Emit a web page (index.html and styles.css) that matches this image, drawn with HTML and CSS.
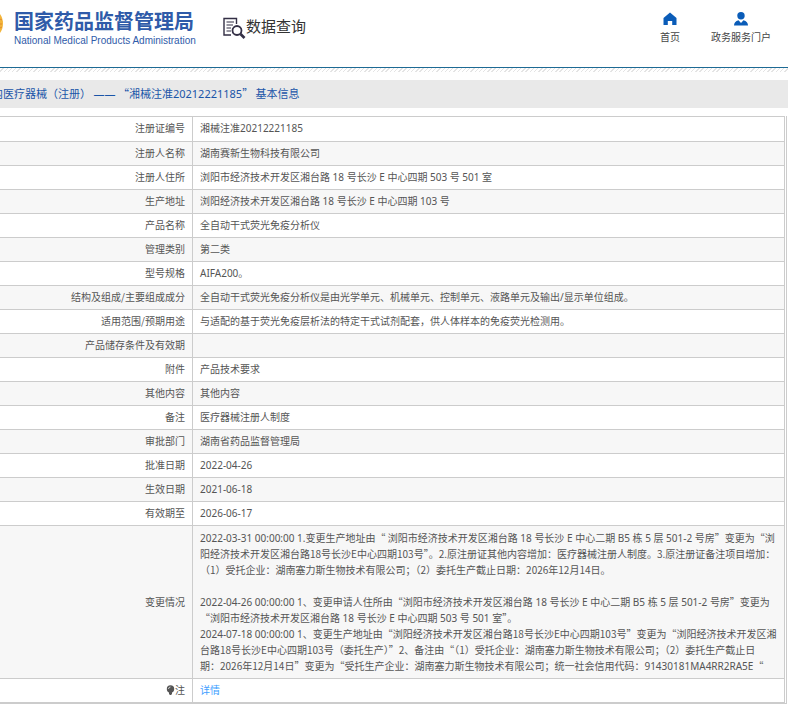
FILE: index.html
```html
<!DOCTYPE html>
<html lang="zh-CN">
<head>
    <meta charset="UTF-8">
    <meta name="viewport" content="width=device-width, initial-scale=1.0">
    <title>数据查询</title>
    <link rel="stylesheet" href="styles.css">
</head>
<body>
    <header class="header">
        <svg class="emblem" width="3" height="24" viewBox="0 0 3 24">
            <path d="M0 2 Q3 6 3 11.500 Q3 17 0 21 Z" fill="#f3b53a"/>
            <path d="M0 7 L2 8 M0 12 L2 12 M0 16 L2 15" stroke="#e08a2c"/>
        </svg>
        <div class="brand">
            <h1 class="brand-name">国家药品监督管理局</h1>
            <p class="brand-en">National Medical Products Administration</p>
        </div>
        <div class="search-title">
            <svg width="23" height="23" viewBox="0 0 23 23" fill="none" stroke="#332f45">
                <path d="M13.500 7 V1.500 H1 V18 H8" stroke-width="1.4"/>
                <path d="M3.500 5 H11 M3.500 8 H10 M3.500 11 H8 M3.500 14 H8" stroke-width="1.2"/>
                <circle cx="14" cy="13.500" r="4.500" stroke-width="1.8"/>
                <path d="M17.500 17 L21.500 21" stroke-width="2.6"/>
            </svg>
            <span>数据查询</span>
        </div>
        <nav class="nav">
            <a href="#" class="nav-link">
                <svg width="14" height="14" viewBox="0 0 14 14">
                    <path d="M7 0.500 L13.500 6 V13 H9.200 V9 H4.800 V13 H0.500 V6 Z" fill="#0a5cb8"/>
                </svg>
                <span>首页</span>
            </a>
            <a href="#" class="nav-link">
                <svg width="14" height="14" viewBox="0 0 14 14" fill="#0a5cb8">
                    <circle cx="7" cy="3.800" r="3.700"/>
                    <path d="M0 13.500 Q0 9.500 4.500 8.300 L7 11 L9.500 8.300 Q14 9.500 14 13.500 Z"/>
                </svg>
                <span>政务服务门户</span>
            </a>
        </nav>
    </header>
    <div class="hatch"></div>
    <div class="crumb">
        <h2 class="crumb-text">内医疗器械（注册） <span class="num">——</span> “湘械注准<span class="num">20212221185</span>” 基本信息</h2>
    </div>

    <main class="detail">
        <table class="detail-table">
            <tr><th scope="row">注册证编号</th><td>湘械注准20212221185</td></tr>
            <tr><th scope="row">注册人名称</th><td>湖南赛新生物科技有限公司</td></tr>
            <tr><th scope="row">注册人住所</th><td>浏阳市经济技术开发区湘台路 18 号长沙 E 中心四期 503 号 501 室</td></tr>
            <tr><th scope="row">生产地址</th><td>浏阳经济技术开发区湘台路 18 号长沙 E 中心四期 103 号</td></tr>
            <tr><th scope="row">产品名称</th><td>全自动干式荧光免疫分析仪</td></tr>
            <tr><th scope="row">管理类别</th><td>第二类</td></tr>
            <tr><th scope="row">型号规格</th><td>AIFA200。</td></tr>
            <tr><th scope="row">结构及组成/主要组成成分</th><td>全自动干式荧光免疫分析仪是由光学单元、机械单元、控制单元、液路单元及输出/显示单位组成。</td></tr>
            <tr><th scope="row">适用范围/预期用途</th><td>与适配的基于荧光免疫层析法的特定干式试剂配套，供人体样本的免疫荧光检测用。</td></tr>
            <tr><th scope="row">产品储存条件及有效期</th><td></td></tr>
            <tr><th scope="row">附件</th><td>产品技术要求</td></tr>
            <tr><th scope="row">其他内容</th><td>其他内容</td></tr>
            <tr><th scope="row">备注</th><td>医疗器械注册人制度</td></tr>
            <tr><th scope="row">审批部门</th><td>湖南省药品监督管理局</td></tr>
            <tr><th scope="row">批准日期</th><td>2022-04-26</td></tr>
            <tr><th scope="row">生效日期</th><td>2021-06-18</td></tr>
            <tr><th scope="row">有效期至</th><td>2026-06-17</td></tr>
            <tr>
                <th scope="row">变更情况</th>
                <td class="changes"><span class="num">2022-03-31 00:00:00 1.</span>变更生产地址由“ 浏阳市经济技术开发区湘台路<span class="num"> 18 </span>号长沙<span class="num"> E </span>中心二期<span class="num"> B5 </span>栋<span class="num"> 5 </span>层<span class="num"> 501-2 </span>号房”变更为“浏<br>
                    阳经济技术开发区湘台路18号长沙E中心四期103号”。2.原注册证其他内容增加：医疗器械注册人制度。3.原注册证备注项目增加：<br>
                    （1）受托企业：湖南塞力斯生物技术有限公司；（2）委托生产截止日期：2026年12月14日。<br>
                    <br>
                    <span class="num">2022-04-26 00:00:00 1</span>、变更申请人住所由“浏阳市经济技术开发区湘台路<span class="num"> 18 </span>号长沙<span class="num"> E </span>中心二期<span class="num"> B5 </span>栋<span class="num"> 5 </span>层<span class="num"> 501-2 </span>号房”变更为<br>
                    “浏阳市经济技术开发区湘台路<span class="num"> 18 </span>号长沙<span class="num"> E </span>中心四期<span class="num"> 503 </span>号<span class="num"> 501 </span>室”。<br>
                    <span class="num">2024-07-18 00:00:00 1</span>、变更生产地址由“浏阳经济技术开发区湘台路18号长沙E中心四期103号”变更为“浏阳经济技术开发区湘<br>
                    台路18号长沙E中心四期103号（委托生产）”2、备注由“（1）受托企业：湖南塞力斯生物技术有限公司；（2）委托生产截止日<br>
                    期：2026年12月14日”变更为“受托生产企业：湖南塞力斯生物技术有限公司；统一社会信用代码：<span class="num">91430181MA4RR2RA5E</span>“</td>
            </tr>
            <tr>
                <th scope="row"><svg class="note-icon" width="9" height="10" viewBox="0 0 9 10">
                    <circle cx="4.500" cy="4" r="3.700" fill="#555"/>
                    <path d="M3 7 H6 V9 L5 10 H4 L3 9 Z" fill="#555"/>
                    <path d="M2.500 4 Q2.500 2 4.500 2" stroke="#ccc" fill="none"/>
                </svg>注</th>
                <td><a href="#" class="more">详情</a></td>
            </tr>
        </table>
    </main>
</body>
</html>
```
FILE: styles.css
```css
body {
    margin: 0;
    background-color: #fff;
    font-family: "Noto Sans CJK SC", sans-serif;
    font-size: 10px;
    line-height: 16px;
    color: #555;
}
h1, h2, p {
    margin: 0;
}
.num {
    font-family: "Noto Sans", "Noto Sans CJK SC", sans-serif;
    line-height: 1;
}
.header {
    display: flex;
    align-items: flex-start;
    height: 67px;
    border-bottom: 1px solid #1d6a94;
}
.emblem {
    margin-top: 12px;
}
.brand {
    width: 180px;
    margin: 9px 0 0 11px;
    color: #2f5ba9;
    white-space: nowrap;
}
.brand-name {
    font-size: 20px;
    line-height: 24px;
    font-weight: 700;
}
.brand-en {
    font-family: "Liberation Sans", Arial, sans-serif;
    font-size: 10px;
    line-height: 16px;
}
.search-title {
    display: flex;
    margin: 17px 0 0 29px;
    font-size: 15px;
    line-height: 18px;
    color: #333;
    white-space: nowrap;
}
.nav {
    display: flex;
    gap: 31px;
    margin: 12px 17px 0 auto;
}
.nav-link {
    display: flex;
    flex-direction: column;
    align-items: center;
    gap: 3px;
    color: #444;
    text-decoration: none;
}
.hatch {
    height: 12px;
    background: repeating-linear-gradient(135deg, #fff 0 2px, #e4e4e4 2px 3px) top / 100% 4px no-repeat;
}
.crumb {
    padding: 5px 0 7px;
    background-color: #e9e9e9;
    overflow: hidden;
}
.crumb-text {
    margin-left: -8px;
    font-size: 11px;
    line-height: 16px;
    font-weight: 400;
    color: #1a55a8;
    white-space: pre;
}
.detail {
    margin: 8px 1px 0 0;
    padding-right: 1px;
    border-right: 1px solid #ccc;
    border-bottom: 1px solid #ccc;
}
.detail-table {
    width: 100%;
    border-collapse: collapse;
}
.detail-table tr:nth-child(even) {
    background-color: #f7f7f7;
}
.detail-table th,
.detail-table td {
    height: 16px;
    padding: 3px 7px 4px;
    border: 1px solid #ccc;
    text-align: left;
}
.detail-table tr:first-child th,
.detail-table tr:first-child td {
    padding-bottom: 5px;
}
.detail-table th {
    width: 178px;
    border-left: 0;
    font-weight: 400;
    text-align: right;
}
.detail-table td {
    font-family: "Noto Sans", "Noto Sans CJK SC", sans-serif;
}
.detail-table .changes {
    padding: 4px 7px;
    font-family: "Noto Sans CJK SC", sans-serif;
    white-space: nowrap;
}
.note-icon {
    vertical-align: -1px;
}
.more {
    color: #409eff;
    text-decoration: none;
}
```
